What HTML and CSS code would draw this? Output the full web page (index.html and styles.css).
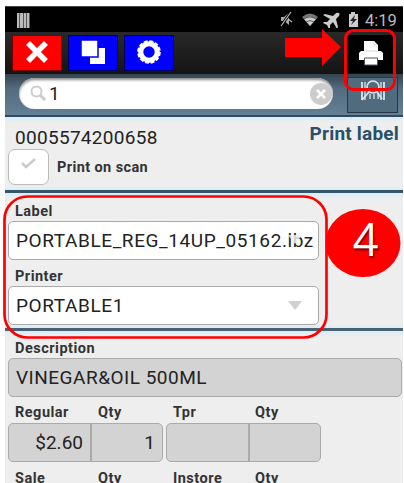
FILE: index.html
```html
<!DOCTYPE html>
<html lang="en">
<head>
<meta charset="utf-8">
<title>Print label</title>
<link rel="stylesheet" href="styles.css">
</head>
<body>
<main class="screen">
  <header class="status">
    <span class="bars"></span>
    <svg class="status-icons" width="81" height="17" viewBox="0 0 81 17">
      <path d="M2 6h3l5-4v12l-5-4H2z" fill="#aaa"/><path d="M2 15L12 1" stroke="#000" stroke-width="3"/><path d="M2 15L12 1M9 8l4 3" stroke="#bbb" stroke-width="1.2"/>
      <path d="M23 6Q31-1 39 6L31 15z" fill="#777"/><path d="M25 8Q31 3 37 8L31 15z" fill="#ccc"/><path d="M25 8Q31 4 37 8M27 11Q31 8 35 11" fill="none" stroke="#444" stroke-width=".8"/>
      <path transform="translate(2 0)" d="M58 2q-2-1-4 1l-2 2-8-2-2 1 7 4-3 3-3 0-1 1 4 2 2 4 1-1 0-3 3-3 4 7 1-2-2-8 3-3q1-2 0-3z" fill="#ccc"/>
      <path d="M70 3h2V1h4v2h3v13h-9z" fill="#ccc"/><path d="M76 4l-5 6h3l-2 4 6-6h-3z" fill="#222"/>
    </svg>
    <span class="clock">4:19</span>
  </header>
  <nav class="toolbar">
    <span class="tool close"><svg width="24" height="24" viewBox="0 0 24 24"><path d="M3 3L21 21M21 3L3 21" stroke="#fff" stroke-width="5.5"/></svg></span>
    <span class="tool"><svg width="24" height="24" viewBox="0 0 24 24"><path d="M9 8h15v16H9z" fill="#fff"/><path d="M0 0h17v17H0z" fill="#fff" stroke="#00f" stroke-width="1.5"/></svg></span>
    <span class="tool"><svg width="24" height="24" viewBox="0 0 24 24"><circle cx="12" cy="12" r="8.2" fill="none" stroke="#fff" stroke-width="5"/><circle cx="12" cy="12" r="10.8" fill="none" stroke="#fff" stroke-width="2" stroke-dasharray="3.9 1.75"/></svg></span>
    <span class="print"><svg width="24" height="26" viewBox="0 0 24 26"><path d="M5 11V1h10l4 4v6h3l2 2v7H0v-7l2-2z" fill="#fff"/><path d="M5 11h14M15 1v4h4" fill="none" stroke="#ccc" stroke-width=".8"/><path d="M5.5 18h13v7h-13z" fill="#fff" stroke="#555" stroke-width="1"/></svg></span>
  </nav>
  <div class="searchbar">
    <div class="search"><svg width="17" height="17" viewBox="0 0 17 17"><circle cx="6.5" cy="6.5" r="5" fill="none" stroke="#ccc" stroke-width="2"/><path d="M10 10l5 5" stroke="#ccc" stroke-width="3"/></svg><span>1</span>
      <svg class="clear" width="22" height="22" viewBox="0 0 22 22"><circle cx="11" cy="11" r="11" fill="#ccc"/><path d="M7 7l8 8M15 7l-8 8" stroke="#fff" stroke-width="2.5"/></svg></div>
    <span class="scan"><svg width="26" height="22" viewBox="0 0 26 22"><g fill="none" stroke="#dce5eb"><path d="M2 2v18M24 2v18" stroke-width="1.8"/><path d="M5 2v18M21 2v18M10 14v5M14 14v5M18 13v6" stroke-width="1.3"/><circle cx="13" cy="7" r="6" stroke-width="1.7"/><path d="M9 12l-7 8M17 12l5 7" stroke-width="1.7"/></g></svg></span>
  </div>
  <section class="item">
    <div class="item-head"><span class="upc">0005574200658</span><strong class="title">Print label</strong></div>
    <div class="option"><span class="check"><svg width="15" height="12" viewBox="0 0 15 12"><path d="M1 6l4 4 9-8" fill="none" stroke="#ccc" stroke-width="2.6"/></svg></span><b>Print on scan</b></div>
  </section>
  <section class="output">
    <b class="caption">Label</b>
    <div class="field"><span class="file">PORTABLE_REG_14UP_05162.lbz</span><i class="arrow small"></i></div>
    <b class="caption second">Printer</b>
    <div class="field"><span class="printer">PORTABLE1</span><i class="arrow"></i></div>
  </section>
  <section class="details">
    <b class="caption">Description</b>
    <div class="description"><span>VINEGAR&amp;OIL 500ML</span></div>
    <div class="names"><b>Regular</b><b>Qty</b><b>Tpr</b><b>Qty</b></div>
    <div class="prices">
      <div class="pair first"><span>$2.60</span><span>1</span></div>
      <div class="pair"><span></span><span></span></div>
    </div>
    <div class="names last"><b>Sale</b><b>Qty</b><b>Instore</b><b>Qty</b></div>
  </section>
</main>
<svg class="notes" width="404" height="483" viewBox="0 0 404 483">
  <path d="M285 38h37V29l19 18-19 19V57h-37z" fill="#f00"/>
  <rect x="345.5" y="30.5" width="49" height="59" rx="8" fill="none" stroke="#f00" stroke-width="3"/>
  <rect x="4.5" y="196.5" width="322" height="141" rx="23" fill="none" stroke="#f00" stroke-width="2.7"/>
  <ellipse cx="363" cy="243" rx="37.5" ry="34" fill="#f00"/>
</svg>
<span class="step">4</span>
</body>
</html>
```
FILE: styles.css
```css
* { box-sizing: border-box; }
body { margin: 0; width: 404px; height: 483px; overflow: hidden; background: #fff; font-family: Roboto, sans-serif; color: #222; }
.screen { margin: 6px 1px 0 5px; height: 477px; overflow: hidden; background: #eee; }
svg { display: block; flex: none; }
.status { height: 26px; background: #000; border-top: 1px solid #444; display: flex; align-items: center; padding: 0 6px 0 12px; }
.bars { width: 13px; height: 15px; background: repeating-linear-gradient(90deg, #bbb 0 2.2px, #555 2.2px 3.4px); margin-top: 2px; }
.status-icons { margin-left: auto; }
.clock { color: #bbb; font-size: 16.5px; margin-left: 5px; width: 32px; white-space: nowrap; padding-top: 2px; }
.toolbar { height: 42px; background: linear-gradient(#292929, #141414); display: flex; gap: 6px; padding: 3px 9px 0 7px; }
.tool { width: 50px; height: 36px; background: #00f; border: 1px solid #000060; display: flex; align-items: center; justify-content: center; padding-bottom: 2px; }
.close { background: #f00; border-color: #700; }
.print { margin-left: auto; width: 47px; background: #000; height: 38px; display: flex; align-items: center; justify-content: center; padding-bottom: 2px; }
.searchbar { height: 41px; background: linear-gradient(#33434f, #526b7e 35%, #648096); display: flex; padding: 4px 5px 0 14px; justify-content: space-between; }
.search { width: 314px; height: 31px; border-radius: 16px; background: #fff; box-shadow: inset 0 2px 3px #888; display: flex; align-items: center; padding: 0 1px 0 11px; font-size: 19px; }
.search span { margin-left: 2px; }
.clear { margin-left: auto; }
.scan { width: 51px; height: 36px; margin-top: -1px; border: 1px solid #263743; background: #506b7e; display: flex; align-items: center; justify-content: center; padding-bottom: 8px; }
.item { height: 75px; border-top: 2px solid #304b60; box-shadow: inset 0 4px 3px -1px #d9edf9, inset 0 -3px 3px -1px #d9edf9; padding: 7px 4px 0 10px; }
.item-head { display: flex; justify-content: space-between; height: 25px; }
.upc { font-size: 19px; letter-spacing: .3px; line-height: 27px; }
.title { font-size: 19px; letter-spacing: .2px; line-height: 20px; color: #285069; }
.option { display: flex; align-items: center; margin-left: -7px; font-size: 14.5px; letter-spacing: .4px; gap: 8px; }
.check { width: 41px; height: 36px; border: 1px solid #bbb; border-radius: 7px; background: #fff; display: flex; align-items: center; justify-content: center; padding-bottom: 8px; }
b { color: #333; }
.output { height: 138px; border-top: 3px solid #35566a; box-shadow: inset 0 4px 3px -1px #d9edf9, inset 0 -3px 3px -1px #d9edf9; padding: 11px 3px 0; }
.caption { display: block; margin-left: 7px; font-size: 14.5px; letter-spacing: .5px; line-height: 16px; }
.field { position: relative; width: 311px; height: 39px; margin-top: 1px; border: 1px solid #aaa; border-radius: 5px; background: #fff; display: flex; align-items: center; justify-content: space-between; padding: 0 7px; font-size: 19px; letter-spacing: .6px; white-space: nowrap; }
.second { margin-top: 9px; }
.arrow { border: 7px solid transparent; border-top: 9px solid #d0d0d0; border-bottom: 0; margin-right: 9px; }
.small { position: absolute; right: 16px; top: 13px; margin: 0; border-width: 9px 7px 0; border-top-color: #eee; opacity: .85; }
.details { border-top: 3px solid #496273; padding: 10px 1px 0 3px; box-shadow: inset 0 4px 3px -1px #d9edf9; }
.description { height: 39px; margin-top: 1px; border: 1px solid #aaa; border-radius: 5px; background: #d3d3d3; padding-left: 7px; font-size: 19px; letter-spacing: .5px; line-height: 38px; }
.names { display: grid; grid-template-columns: 83px 75px 82px 60px; padding-left: 7px; margin-top: 8px; font-size: 14.5px; letter-spacing: .5px; line-height: 16px; }
.prices { display: flex; gap: 3px; margin-top: 2px; }
.pair { width: 155px; height: 39px; display: grid; grid-template-columns: 83px 1fr; border: 1px solid #aaa; border-radius: 5px; background: #d3d3d3; text-align: right; font-size: 19px; line-height: 38px; }
.pair span { padding-right: 7px; }
.pair span:first-child { border-right: 2px solid #aaa; }
.last { margin-top: 9px; }
.notes { position: absolute; left: 0; top: 0; }
.step { position: absolute; left: 328px; top: 211px; width: 75px; text-align: center; font: 45px/55px "Open Sans", sans-serif; color: #fff; text-shadow: 1px 2px 2px #700; }
```
